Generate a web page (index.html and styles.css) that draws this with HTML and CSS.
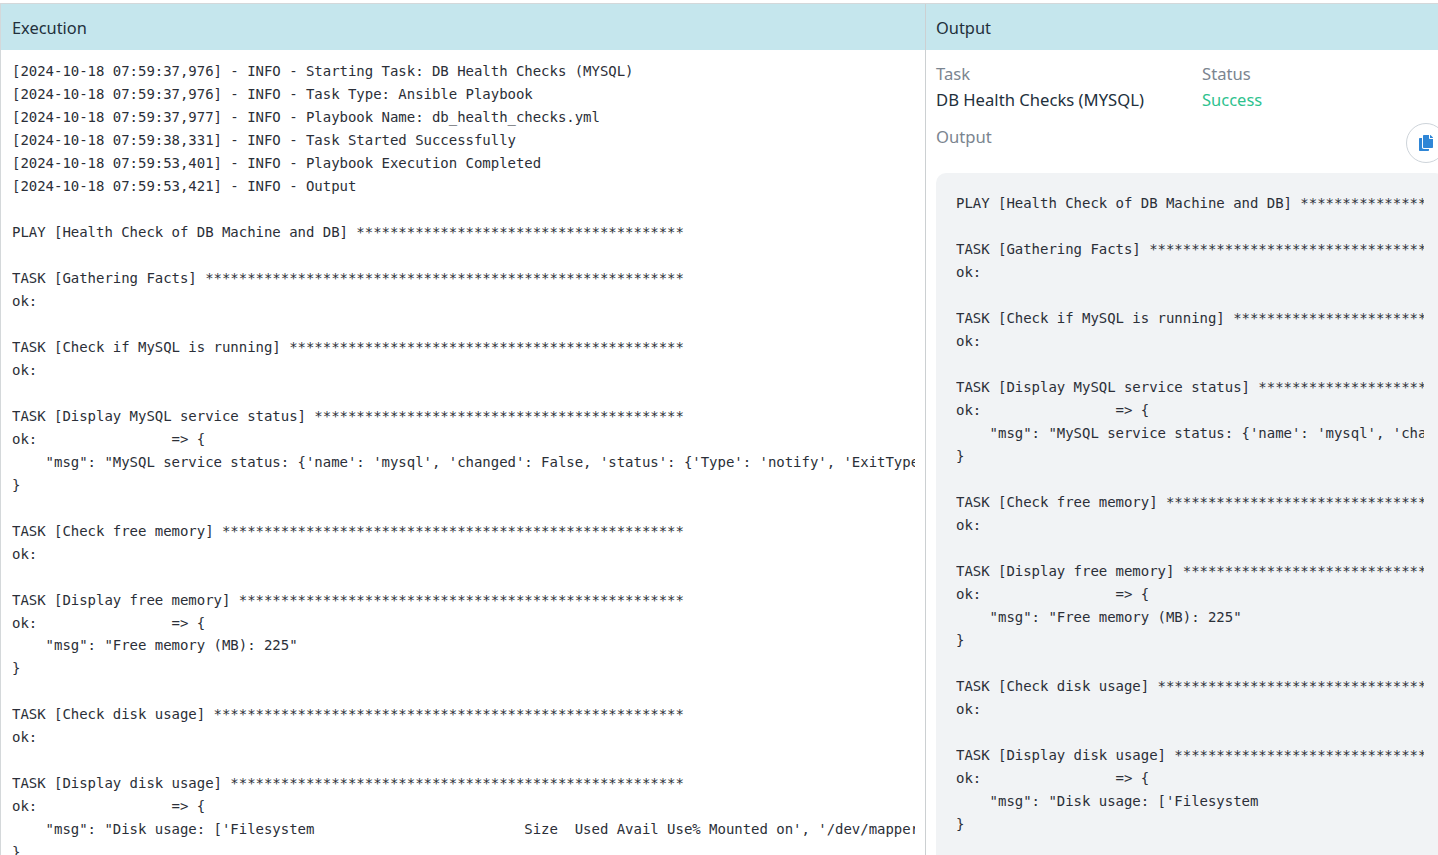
FILE: index.html
```html
<!DOCTYPE html>
<html lang="en">
<head>
<meta charset="utf-8">
<title>Execution</title>
<link rel="stylesheet" href="styles.css">
</head>
<body>
<main class="layout">
<section class="panel panel-exec">
<h2 class="panel-head">Execution</h2>
<div class="exec-body">
<pre class="log">[2024-10-18 07:59:37,976] - INFO - Starting Task: DB Health Checks (MYSQL)
[2024-10-18 07:59:37,976] - INFO - Task Type: Ansible Playbook
[2024-10-18 07:59:37,977] - INFO - Playbook Name: db_health_checks.yml
[2024-10-18 07:59:38,331] - INFO - Task Started Successfully
[2024-10-18 07:59:53,401] - INFO - Playbook Execution Completed
[2024-10-18 07:59:53,421] - INFO - Output

PLAY [Health Check of DB Machine and DB] ***************************************

TASK [Gathering Facts] *********************************************************
ok:

TASK [Check if MySQL is running] ***********************************************
ok:

TASK [Display MySQL service status] ********************************************
ok:                => {
    "msg": "MySQL service status: {'name': 'mysql', 'changed': False, 'status': {'Type': 'notify', 'ExitType': 'main', 'Restart': 'always'}}"
}

TASK [Check free memory] *******************************************************
ok:

TASK [Display free memory] *****************************************************
ok:                => {
    "msg": "Free memory (MB): 225"
}

TASK [Check disk usage] ********************************************************
ok:

TASK [Display disk usage] ******************************************************
ok:                => {
    "msg": "Disk usage: ['Filesystem                         Size  Used Avail Use% Mounted on', '/dev/mapper/vg-root  50G  12G  38G  24% /']"
}</pre>
</div>
</section>
<section class="panel panel-output">
<h2 class="panel-head">Output</h2>
<div class="output-body">
<div class="meta">
<div class="meta-item">
<div class="label">Task</div>
<div class="value">DB Health Checks (MYSQL)</div>
</div>
<div class="meta-item">
<div class="label">Status</div>
<div class="value success">Success</div>
</div>
</div>
<div class="label output-label">Output</div>
<button class="copy" type="button" aria-label="Copy">
<svg class="copy-icon" viewBox="0 0 448 512" aria-hidden="true"><path d="M320 448v40c0 13.255-10.745 24-24 24H24c-13.255 0-24-10.745-24-24V120c0-13.255 10.745-24 24-24h72v296c0 30.879 25.121 56 56 56h168zm0-344V0H152c-13.255 0-24 10.745-24 24v368c0 13.255 10.745 24 24 24h272c13.255 0 24-10.745 24-24V128H344c-13.2 0-24-10.8-24-24zm120.971-31.029L375.029 7.029A24 24 0 0 0 358.059 0H352v96h96v-6.059a24 24 0 0 0-7.029-16.97z"/></svg>
</button>
<div class="code-card">
<pre class="log">PLAY [Health Check of DB Machine and DB] ***************************************

TASK [Gathering Facts] *********************************************************
ok:

TASK [Check if MySQL is running] ***********************************************
ok:

TASK [Display MySQL service status] ********************************************
ok:                => {
    "msg": "MySQL service status: {'name': 'mysql', 'changed': False, 'status': {'Type': 'notify'}}"
}

TASK [Check free memory] *******************************************************
ok:

TASK [Display free memory] *****************************************************
ok:                => {
    "msg": "Free memory (MB): 225"
}

TASK [Check disk usage] ********************************************************
ok:

TASK [Display disk usage] ******************************************************
ok:                => {
    "msg": "Disk usage: ['Filesystem
}</pre>
</div>
</div>
</section>
</main>
</body>
</html>
```
FILE: styles.css
```css
* { box-sizing: border-box; }
html, body { margin: 0; height: 100%; overflow: hidden; background: #fff; }
body {
  padding-top: 3px;
  font-family: "Noto Sans", sans-serif;
  color: #212529;
}
.layout {
  display: flex;
  width: 1470px;
  height: 852px;
  border-top: 1px solid #d4d8da;
  border-left: 1px solid #d4d8da;
}
.panel { flex: none; overflow: hidden; }
.panel-exec { width: 925px; border-right: 1px solid #ccd0d2; }
.panel-output { width: 544px; }
.panel-head {
  margin: 0;
  height: 46px;
  padding: 0 10px 0 11px;
  display: flex;
  align-items: center;
  background: #c5e6ed;
  font-size: 16.4px;
  font-weight: 400;
  color: #22303c;
}
.panel-output .panel-head { padding-left: 10px; }
.log {
  margin: 0;
  overflow: hidden;
  font-family: "DejaVu Sans Mono", monospace;
  font-size: 14px;
  letter-spacing: -0.03px;
  line-height: 22.97px;
  color: #2b2f38;
}
.exec-body { padding: 10.25px 10px 0 11px; }
.output-body { position: relative; padding: 11px 0 0 10px; }
.meta { display: grid; grid-template-columns: 266px 266px; }
.label, .value { font-size: 16.65px; line-height: 26px; }
.label { color: #7b8590; }
.value { color: #22303c; }
.success { color: #2ec28e; font-size: 16.5px; }
.output-label { margin-top: 11px; margin-bottom: 23px; }
.copy {
  position: absolute;
  top: 73px;
  left: 480px;
  width: 40px;
  height: 40px;
  padding: 0;
  display: flex;
  align-items: center;
  justify-content: center;
  background: #fff;
  border: 1px solid #ced4da;
  border-radius: 50%;
}
.copy-icon { width: 14px; height: 16px; fill: #2f86d6; }
.code-card {
  width: 509px;
  height: 700px;
  padding: 19px 21px 19px 20px;
  background: #f1f3f5;
  border-radius: 10px;
}
.code-card .log { line-height: 23px; }
```
